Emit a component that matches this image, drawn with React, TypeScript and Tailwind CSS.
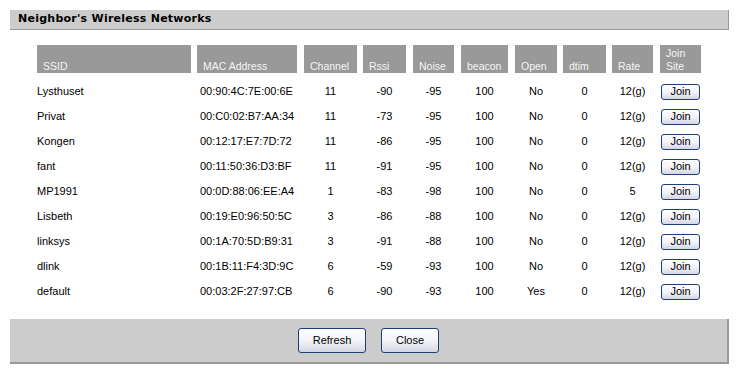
import React from "react";

type Col = { label: string[]; w: number; track: number; align: "left" | "center"; pl?: number };

const cols: Col[] = [
  { label: ["SSID"], w: 154, track: 160, align: "left", pl: 0 },
  { label: ["MAC Address"], w: 100, track: 107, align: "left", pl: 3 },
  { label: ["Channel"], w: 53, track: 59, align: "center" },
  { label: ["Rssi"], w: 43, track: 50, align: "center" },
  { label: ["Noise"], w: 41, track: 48, align: "center" },
  { label: ["beacon"], w: 47, track: 54, align: "center" },
  { label: ["Open"], w: 42, track: 48, align: "center" },
  { label: ["dtim"], w: 43, track: 49, align: "center" },
  { label: ["Rate"], w: 41, track: 48, align: "center" },
  { label: ["Join", "Site"], w: 41, track: 41, align: "center" },
];

const rows: string[][] = [
  ["Lysthuset", "00:90:4C:7E:00:6E", "11", "-90", "-95", "100", "No", "0", "12(g)"],
  ["Privat", "00:C0:02:B7:AA:34", "11", "-73", "-95", "100", "No", "0", "12(g)"],
  ["Kongen", "00:12:17:E7:7D:72", "11", "-86", "-95", "100", "No", "0", "12(g)"],
  ["fant", "00:11:50:36:D3:BF", "11", "-91", "-95", "100", "No", "0", "12(g)"],
  ["MP1991", "00:0D:88:06:EE:A4", "1", "-83", "-98", "100", "No", "0", "5"],
  ["Lisbeth", "00:19:E0:96:50:5C", "3", "-86", "-88", "100", "No", "0", "12(g)"],
  ["linksys", "00:1A:70:5D:B9:31", "3", "-91", "-88", "100", "No", "0", "12(g)"],
  ["dlink", "00:1B:11:F4:3D:9C", "6", "-59", "-93", "100", "No", "0", "12(g)"],
  ["default", "00:03:2F:27:97:CB", "6", "-90", "-93", "100", "Yes", "0", "12(g)"],
];

function Btn({ children, className }: { children: React.ReactNode; className: string }) {
  return (
    <button
      className={
        "flex items-center justify-center rounded-[3px] border border-[#1d4078] bg-gradient-to-b from-white via-[#f4f4f8] to-[#d6d6e4] text-[11px] leading-none text-black " +
        className
      }
    >
      {children}
    </button>
  );
}

export default function App() {
  return (
    <div className="w-[739px] h-[378px] bg-white overflow-hidden font-['Liberation_Sans',Arial,sans-serif] text-[11px] text-black">
      <div className="pt-[10px] px-[10px]">
        <div className="h-[20px] bg-[#cccccc] border-b border-r border-[#999999] pl-[8px] flex items-center">
          <span className="font-['DejaVu_Sans',Verdana,sans-serif] font-bold text-[11px] tracking-[0.25px] text-black">
            Neighbor's Wireless Networks
          </span>
        </div>
      </div>

      <div className="ml-[37px] mt-[15px]">
        <div className="flex h-[28px]">
          {cols.map((c, i) => (
            <div key={i} style={{ width: c.track }} className="shrink-0">
              <div
                style={{ width: c.w }}
                className="h-[28px] bg-[#999999] text-[#f4f4f4] text-[10.5px] leading-[13px] pl-[6px] flex flex-col justify-end"
              >
                {c.label.map((l, j) => (
                  <span key={j}>{l}</span>
                ))}
              </div>
            </div>
          ))}
        </div>

        <div className="mt-[6px]">
          {rows.map((r, ri) => (
            <div key={ri} className="flex h-[25px] items-center">
              {cols.map((c, ci) => (
                <div key={ci} style={{ width: c.track }} className="shrink-0">
                  {ci < 9 ? (
                    <div
                      style={{ width: c.w, paddingLeft: c.pl ?? 0 }}
                      className={c.align === "center" ? "text-center" : "text-left"}
                    >
                      {r[ci]}
                    </div>
                  ) : (
                    <div style={{ width: c.w }} className="flex justify-center">
                      <Btn className="w-[39px] h-[16px]">Join</Btn>
                    </div>
                  )}
                </div>
              ))}
            </div>
          ))}
        </div>
      </div>

      <div className="mx-[10px] mt-[15px] h-[45px] bg-[#cccccc] border-r-2 border-b-2 border-[#999999] flex items-center justify-center gap-[15px]">
        <Btn className="w-[68px] h-[25px]">Refresh</Btn>
        <Btn className="w-[58px] h-[25px]">Close</Btn>
      </div>
    </div>
  );
}
